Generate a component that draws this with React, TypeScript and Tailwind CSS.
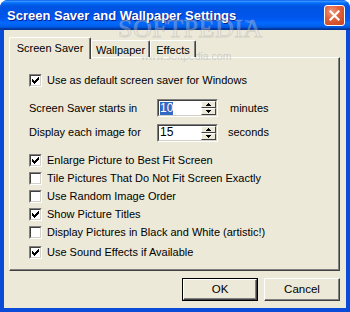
import React from "react";

function Check({ checked }: { checked: boolean }) {
  return (
    <div className="w-[13px] h-[13px] shrink-0 border border-[#808080] border-r-white border-b-white">
      <div className="w-full h-full border border-[#404040] border-r-[#D4D0C8] border-b-[#D4D0C8] bg-white flex items-center justify-center">
        {checked && (
          <svg width="7" height="7" viewBox="0 0 7 7" shapeRendering="crispEdges">
            <path
              d="M6 0h1v3h-1v1h-1v1h-1v1h-1v1h-1v-1h-1v-1h-1v-3h1v1h1v1h1v-1h1v-1h1z"
              fill="#000"
            />
          </svg>
        )}
      </div>
    </div>
  );
}

function CheckRow({ checked, label, className = "" }: { checked: boolean; label: string; className?: string }) {
  return (
    <div className={"h-[18px] flex items-center " + className}>
      <Check checked={checked} />
      <span className="ml-[5px] leading-[13px] whitespace-nowrap">{label}</span>
    </div>
  );
}

function SpinBtn({ up }: { up: boolean }) {
  return (
    <div className="h-[7px] w-[15px] bg-[#ECE9D8] border-t border-l border-white border-r border-b border-r-[#404040] border-b-[#404040] flex items-center justify-center">
      <svg width="5" height="3" viewBox="0 0 5 3" shapeRendering="crispEdges">
        {up ? (
          <path d="M2 0h1v1h1v1h1v1h-5v-1h1v-1h1z" fill="#000" />
        ) : (
          <path d="M0 0h5v1h-1v1h-1v1h-1v-1h-1v-1h-1z" fill="#000" />
        )}
      </svg>
    </div>
  );
}

function Spin({ value, selected }: { value: string; selected?: boolean }) {
  return (
    <div className="w-[61px] h-[18px] shrink-0 border border-[#808080] border-r-white border-b-white">
      <div className="w-full h-full border border-[#404040] border-r-[#D4D0C8] border-b-[#D4D0C8] bg-white flex items-center">
        <div className="flex-1 pl-[1px] flex items-center">
          <span
            className={
              "leading-[13px] text-[12px] px-[0px] " +
              (selected ? "bg-[#316AC5] text-white" : "text-black")
            }
          >
            {value}
          </span>
        </div>
        <div className="flex flex-col mr-[0px]">
          <SpinBtn up />
          <SpinBtn up={false} />
        </div>
      </div>
    </div>
  );
}

function SpinRow({
  label,
  value,
  unit,
  unitGap,
  selected,
  className = "",
}: {
  label: string;
  value: string;
  unit: string;
  unitGap: string;
  selected?: boolean;
  className?: string;
}) {
  return (
    <div className={"flex items-center " + className}>
      <span className="w-[128px] shrink-0 whitespace-nowrap leading-[13px]">{label}</span>
      <Spin value={value} selected={selected} />
      <span className={"whitespace-nowrap leading-[13px] " + unitGap}>{unit}</span>
    </div>
  );
}

function Button({ label, def }: { label: string; def?: boolean }) {
  const inner = (
    <div className="w-full h-full bg-[#ECE9D8] border-t border-l border-white border-r border-b border-r-[#404040] border-b-[#404040] shadow-[inset_-1px_-1px_0_#808080] flex items-center justify-center">
      <span className="leading-[13px] text-[11.5px]">{label}</span>
    </div>
  );
  return def ? (
    <div className="w-[76px] h-[23px] border border-black">{inner}</div>
  ) : (
    <div className="w-[76px] h-[23px]">{inner}</div>
  );
}

export default function App() {
  return (
    <div className="w-[350px] h-[312px] relative overflow-hidden rounded-t-[8px] bg-[#0A4BD8] flex flex-col font-['Liberation_Sans',Arial,sans-serif] text-[11px] text-black">
      <div className="h-[30px] shrink-0 flex items-center pl-[7px] pr-[5px] bg-[linear-gradient(180deg,#0058EE_0%,#3A93FF_4%,#288EFF_6%,#127DFF_8%,#036FFC_10%,#0262EE_14%,#0057E5_20%,#0054E3_24%,#0055EB_56%,#005BF5_66%,#026AFE_76%,#0062EF_86%,#0052D6_92%,#0040AB_94%,#003092_100%)]">
        <span className="text-white font-bold text-[13px] leading-[16px] pt-[1px] [text-shadow:1px_1px_0_#0A1E8C] whitespace-nowrap">
          Screen Saver and Wallpaper Settings
        </span>
        <div className="ml-auto w-[21px] h-[21px] rounded-[3px] border border-white bg-[radial-gradient(circle_at_35%_30%,#F09A7E_0%,#E2623E_40%,#C8401A_100%)] flex items-center justify-center">
          <svg width="11" height="11" viewBox="0 0 11 11">
            <path d="M1.5 1.5L9.5 9.5M9.5 1.5L1.5 9.5" stroke="#fff" strokeWidth="2.2" strokeLinecap="square" />
          </svg>
        </div>
      </div>

      <div className="flex-1 mx-[4px] mb-[4px] bg-[#ECE9D8] pt-[7px] flex flex-col">
        <div className="flex items-end pl-[5px] relative z-10 mb-[-2px]">
          <div className="w-[82px] h-[22px] bg-[#ECE9D8] border-l border-t border-white border-r border-r-[#404040] shadow-[inset_-1px_0_0_#808080] rounded-t-[2px] flex justify-center pt-[3px]">
            <span className="leading-[14px]">Screen Saver</span>
          </div>
          <div className="w-[59px] h-[17px] mb-[2px] bg-[#ECE9D8] border-l border-t border-white border-r border-r-[#404040] shadow-[inset_-1px_0_0_#808080] rounded-t-[2px] flex justify-center pt-[2px]">
            <span className="leading-[14px]">Wallpaper</span>
          </div>
          <div className="w-[46px] h-[17px] mb-[2px] bg-[#ECE9D8] border-l border-t border-white border-r border-r-[#404040] shadow-[inset_-1px_0_0_#808080] rounded-t-[2px] flex justify-center pt-[2px]">
            <span className="leading-[14px]">Effects</span>
          </div>
        </div>

        <div className="ml-[5px] mr-[6px] h-[214px] border border-white border-r-[#404040] border-b-[#404040] shadow-[inset_-1px_-1px_0_#808080] pl-[19px] pt-[13px] flex flex-col">
          <CheckRow checked label="Use as default screen saver for Windows" />
          <SpinRow
            className="mt-[10px] h-[18px]"
            label="Screen Saver starts in"
            value="10"
            unit="minutes"
            unitGap="ml-[12px]"
            selected
          />
          <SpinRow
            className="mt-[6px] h-[19px]"
            label="Display each image for"
            value="15"
            unit="seconds"
            unitGap="ml-[10px]"
          />
          <CheckRow className="mt-[9px]" checked label="Enlarge Picture to Best Fit Screen" />
          <CheckRow checked={false} label="Tile Pictures That Do Not Fit Screen Exactly" />
          <CheckRow checked={false} label="Use Random Image Order" />
          <CheckRow checked label="Show Picture Titles" />
          <CheckRow checked={false} label="Display Pictures in Black and White (artistic!)" />
          <CheckRow className="mt-[2px]" checked label="Use Sound Effects if Available" />
        </div>

        <div className="mt-[7px] mr-[6px] flex justify-end gap-[6px]">
          <Button label="OK" def />
          <Button label="Cancel" />
        </div>
      </div>

      <div className="absolute left-[118px] top-[15px] font-['Liberation_Serif',serif] text-[26px] leading-[28px] tracking-[0.5px] text-white/25 [-webkit-text-stroke:1px_rgba(160,160,160,0.35)] pointer-events-none">
        SOFTPEDIA
      </div>
      <div className="absolute left-[244px] top-[18px] text-[7px] text-white/40 pointer-events-none">™</div>
      <div className="absolute left-[141px] top-[50px] font-['Liberation_Sans',sans-serif] text-[10.5px] leading-[12px] text-[#b8b8b8]/60 pointer-events-none">
        www.softpedia.com
      </div>
    </div>
  );
}
